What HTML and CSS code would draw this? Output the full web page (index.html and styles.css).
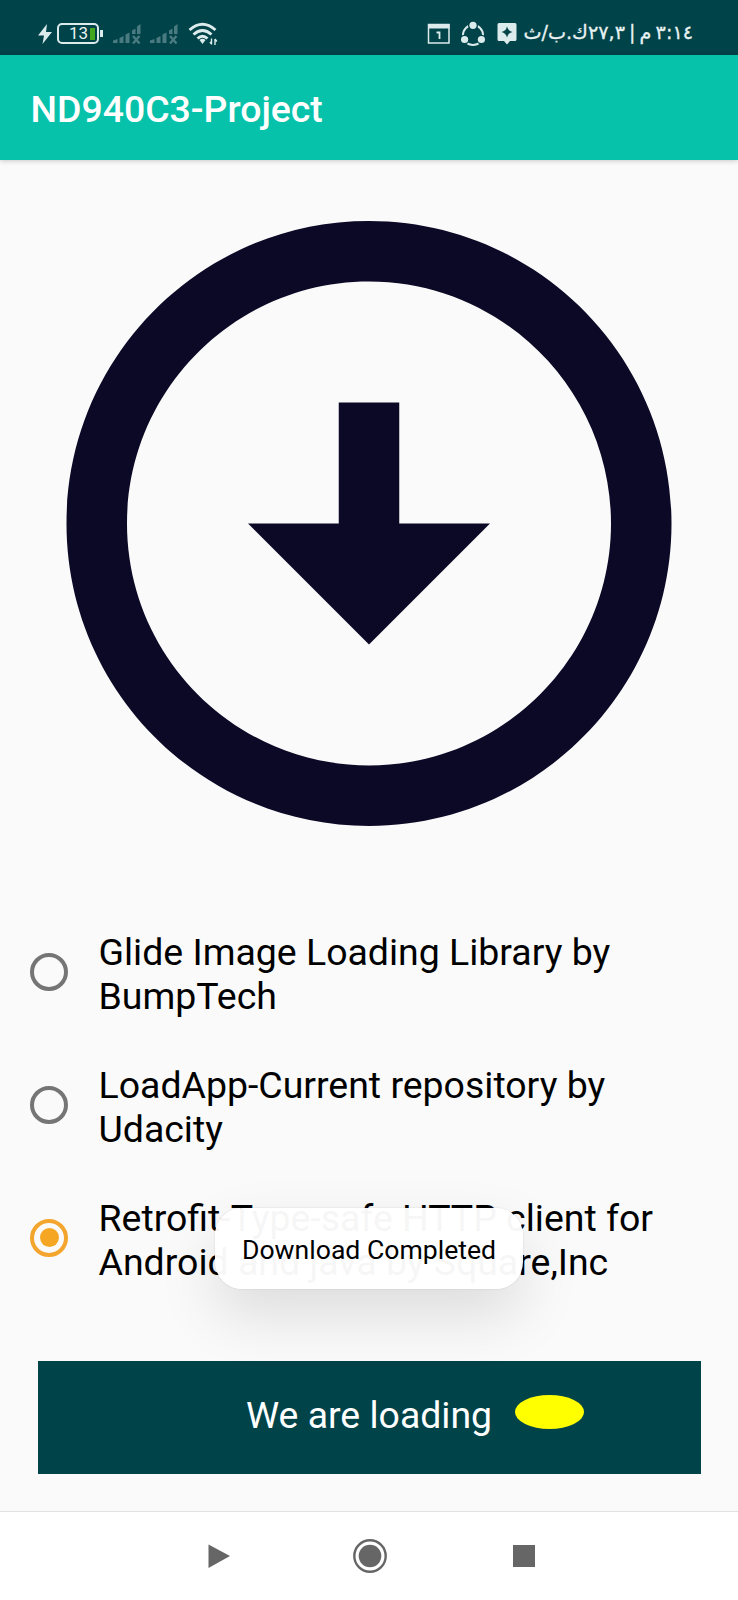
FILE: index.html
```html
<!DOCTYPE html>
<html lang="en">
<head>
<meta charset="utf-8">
<title>ND940C3-Project</title>
<link rel="stylesheet" href="styles.css">
</head>
<body>
<div class="screen">
  <div class="status">
    <div class="status-left">
      <svg class="bolt" width="14" height="20" viewBox="0 0 14 20"><path d="M9 0 0 11.500H6L4.500 20 14 8H8z"/></svg>
      <div class="battery"><span class="level">13</span><span class="charge"></span></div>
      <svg class="signal" width="28" height="20" viewBox="0 0 28 20"><path d="M0 19V16.500L4.500 15V19zM6.500 19V14L10.500 12V19zM12.500 19V10.500L16.500 8.500V19zM19 10V6.500L22.500 4.500V10zM24 10V2.500L27.500 0V10z"/><path class="cross" d="M20 12 26.500 19.500M26.500 12 20 19.500"/></svg>
      <svg class="signal second" width="28" height="20" viewBox="0 0 28 20"><path d="M0 19V16.500L4.500 15V19zM6.500 19V14L10.500 12V19zM12.500 19V10.500L16.500 8.500V19zM19 10V6.500L22.500 4.500V10zM24 10V2.500L27.500 0V10z"/><path class="cross" d="M20 12 26.500 19.500M26.500 12 20 19.500"/></svg>
      <svg class="wifi" width="30" height="24" viewBox="0 0 30 24"><path class="arc" d="M1.500 8Q14.500-3.500 27.500 8M5.500 12.500Q14.500 4.500 23.500 12.500M9.500 16.500Q14.500 12 19.500 16.500"/><path d="M11.500 18q3-2.500 6 0l-3 4z"/><path class="data" d="M23.500 16.500v6M27 17v6M22 20l1.500 2M27 17l1.800 2.500"/></svg>
    </div>
    <div class="status-right">
      <svg width="24" height="22" viewBox="0 0 24 22"><path class="frame" d="M1.500 1.500h20.500v18.500H1.500z"/><path d="M1 1h21.500v4.500H1z"/><path class="one" d="M9.500 9.500h3V16"/></svg>
      <svg class="share" width="26" height="26" viewBox="0 0 26 26"><circle class="ring" cx="13" cy="14" r="10"/><circle class="gap" cx="13" cy="4.500" r="5"/><circle class="gap" cx="4.800" cy="18.500" r="4.800"/><circle class="gap" cx="21.200" cy="18.500" r="4.800"/><circle cx="13" cy="4.300" r="3.600"/><circle cx="4.600" cy="18.500" r="3.600"/><circle cx="21.400" cy="18.500" r="3.600"/></svg>
      <svg class="spark" width="20" height="24" viewBox="0 0 20 24"><path d="M2 1h16q1.500 0 1.500 1.500v15q0 1.500-1.500 1.500h-5l-3 3.500L7 19H2Q.5 19 .5 17.500v-15Q.5 1 2 1z"/><path class="star" d="M10 4.500Q11 9 15.500 10 11 11 10 15.500 9 11 4.500 10 9 9 10 4.500z"/></svg>
      <span class="clock" dir="rtl" lang="ar">٣:١٤ م | ٢٧,٣ك.ب/ث</span>
    </div>
  </div>

  <header class="appbar"><h1 class="title">ND940C3-Project</h1></header>

  <main class="content">
    <svg class="download" viewBox="0 -.015 24 24"><path d="M12 4c4.410 0 8 3.590 8 8s-3.590 8-8 8-8-3.590-8-8 3.590-8 8-8m0-2C6.480 2 2 6.480 2 12s4.480 10 10 10 10-4.480 10-10S17.520 2 12 2zm1 10V8h-2v4H8l4 4 4-4h-3z"/></svg>

    <div class="options">
      <div class="option"><span class="radio"></span><span class="label">Glide Image Loading Library by<br>BumpTech</span></div>
      <div class="option"><span class="radio"></span><span class="label">LoadApp-Current repository by<br>Udacity</span></div>
      <div class="option"><span class="radio checked"></span><span class="label">Retrofit-Type-safe HTTP client for<br>Android and java by Square,Inc</span></div>
    </div>

    <div class="button"><span class="button-text">We are loading</span><span class="progress"></span></div>
  </main>

  <nav class="nav">
    <svg width="24" height="36" viewBox="0 0 24 36"><path d="M1.500 6.500 23 18 1.500 30z"/></svg>
    <svg width="36" height="36" viewBox="0 0 36 36"><circle class="home-ring" cx="18" cy="18" r="15.700"/><circle cx="18" cy="18" r="11.300"/></svg>
    <svg width="24" height="36" viewBox="0 0 24 36"><path d="M1 7h22v22H1z"/></svg>
  </nav>

  <div class="toast">Download Completed</div>
</div>
</body>
</html>
```
FILE: styles.css
```css
* { box-sizing: border-box; }
body { margin: 0; font-family: Roboto, sans-serif; }
.screen {
  position: relative;
  display: flex;
  flex-direction: column;
  width: 738px;
  height: 1600px;
  overflow: hidden;
  background: #fafafa;
}
svg { display: block; flex: none; }

.status {
  display: flex;
  justify-content: space-between;
  height: 55px;
  padding: 0 45px 0 38px;
  background: #004349;
  fill: #dcebec;
}
.status-left, .status-right { display: flex; align-items: center; padding-top: 12px; }
.battery {
  position: relative;
  display: flex;
  align-items: center;
  width: 42px;
  height: 21px;
  margin-left: 5px;
  padding-left: 10px;
  border: 2.500px solid #dcebec;
  border-radius: 5px;
}
.battery::after {
  content: "";
  position: absolute;
  right: -6px;
  top: 5px;
  width: 3px;
  height: 7px;
  background: #dcebec;
}
.level { color: #e8f2f2; font-size: 17px; line-height: 17px; }
.charge { width: 5px; height: 12px; margin-left: 2px; background: #43a820; }
.signal { margin-left: 14px; fill: #4a7b80; }
.signal.second { margin-left: 9px; }
.cross { fill: none; stroke: #4a7b80; stroke-width: 2.400; }
.wifi { margin-left: 10px; }
.arc { fill: none; stroke: #dcebec; stroke-width: 2.900; }
.data { fill: none; stroke: #dcebec; stroke-width: 1.400; }
.frame { fill: none; stroke: #dcebec; stroke-width: 1.500; }
.one { fill: none; stroke: #dcebec; stroke-width: 1.800; }
.share { margin-left: 9px; }
.ring { fill: none; stroke: #dcebec; stroke-width: 2; }
.gap, .star { fill: #004349; }
.spark { margin-left: 11px; }
.clock {
  width: 168px;
  margin-left: 8px;
  padding-bottom: 2px;
  color: #e8f2f2;
  font: 19.200px/24px "DejaVu Sans", sans-serif;
  word-spacing: -2px;
  -webkit-text-stroke: .3px #e8f2f2;
  white-space: nowrap;
}

.appbar {
  display: flex;
  align-items: center;
  height: 105px;
  padding: 2px 0 0 30.500px;
  background: #07c2aa;
  box-shadow: 0 1px 5px rgba(0, 0, 0, .2);
}
.title { margin: 0; color: #fff; font-size: 37.400px; font-weight: 500; line-height: 44px; }

.content { display: flex; flex: 1; flex-direction: column; align-items: center; }
.download { width: 726px; height: 726px; fill: #0c0926; }
.options { align-self: stretch; padding: 20px 0 0 30px; }
.option { display: flex; align-items: center; height: 132.700px; gap: 30.500px; }
.radio {
  position: relative;
  flex: none;
  width: 38px;
  height: 38px;
  border: 4px solid #757575;
  border-radius: 50%;
}
.radio.checked { border-color: #f3a52d; }
.radio.checked::after {
  content: "";
  position: absolute;
  inset: 5.500px;
  border-radius: 50%;
  background: #f5a623;
}
.label { padding-top: 4px; color: #000; font-size: 37.450px; line-height: 44px; white-space: nowrap; }
.button {
  display: flex;
  align-items: center;
  width: 663px;
  height: 113px;
  margin-top: 57px;
  padding-left: 208.500px;
  background: #004349;
}
.button-text { padding-bottom: 6px; color: #fff; font-size: 37.400px; line-height: 44px; white-space: nowrap; }
.progress { width: 69px; height: 34px; margin: 0 0 12px 23px; border-radius: 50%; background: #ff0; }

.nav {
  display: flex;
  justify-content: center;
  align-items: center;
  gap: 121.500px;
  height: 89px;
  padding-left: 2px;
  border-top: 1px solid #e2e2e2;
  background: #fff;
  fill: #666;
}
.nav svg:last-child { margin: 0 -2px 0 2px; }
.home-ring { fill: none; stroke: #666; stroke-width: 2.400; }

.toast {
  position: absolute;
  left: 215px;
  top: 1208px;
  width: 308px;
  height: 81px;
  border-radius: 27px;
  background: rgba(255, 255, 255, .965);
  box-shadow: 0 26px 60px rgba(0, 0, 0, .12), 0 0 2px rgba(0, 0, 0, .14);
  color: #000;
  font-size: 26.600px;
  line-height: 83px;
  text-align: center;
  white-space: nowrap;
}
```
